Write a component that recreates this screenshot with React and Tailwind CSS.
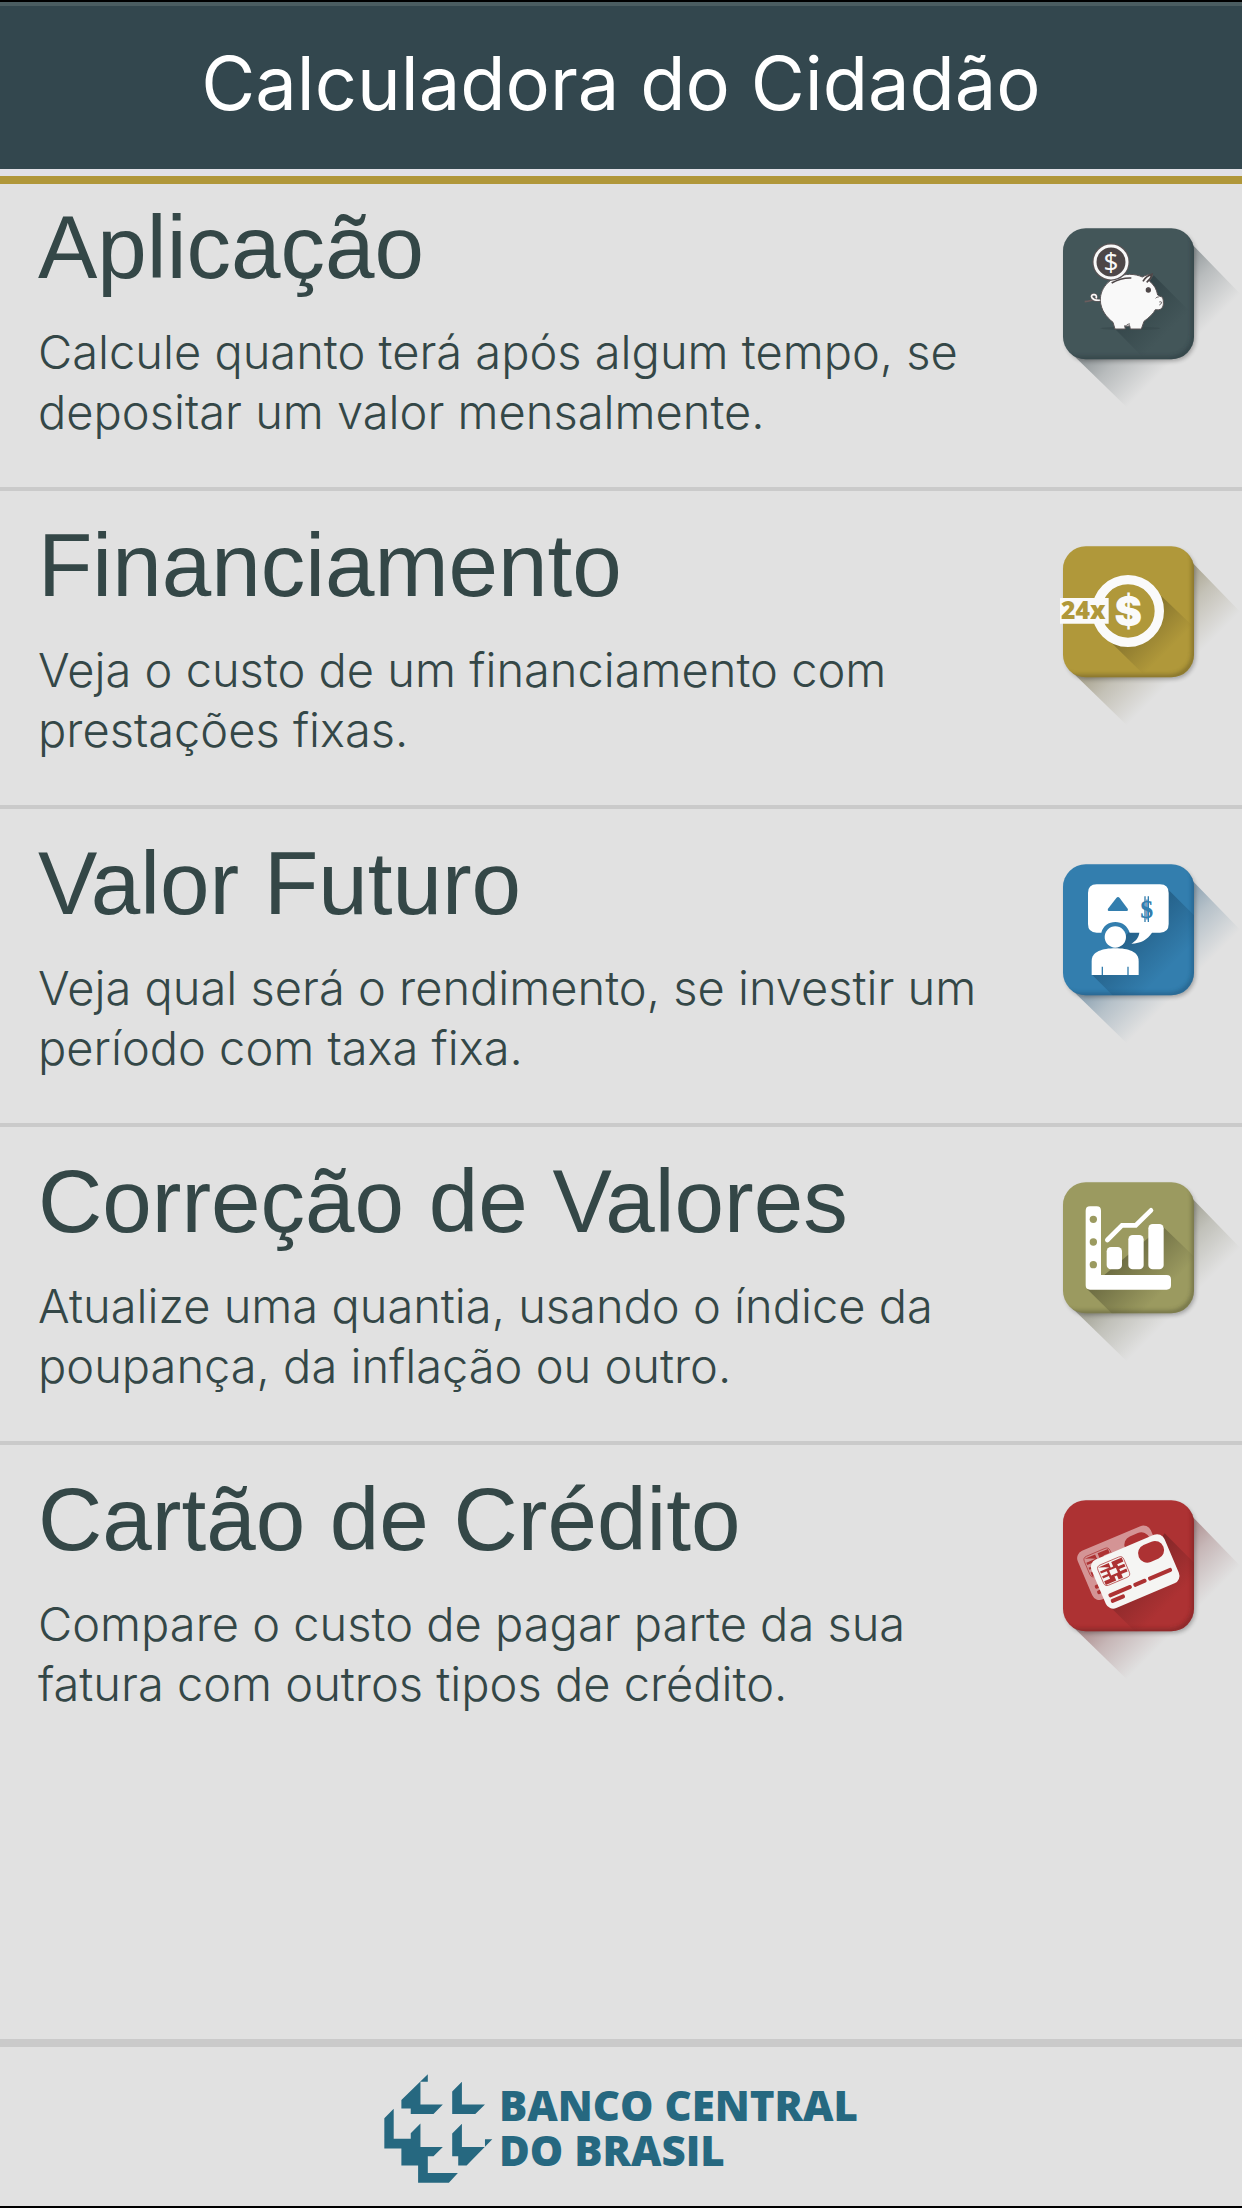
function PiggyIcon() {
  return (
    <g>
      <ellipse cx="265" cy="352" rx="90" ry="5" fill="#37474b" opacity=".6" />
      <path d="M160 262c-8 6-20 9-32 10" fill="none" stroke="#6b5d5e" strokeWidth="5" />
      <path d="M178 267c-12 2-24-1-28-7s1-10 7-9 8 6 5 11" fill="none" stroke="#6b5d5e" strokeWidth="8" />
      <path d="M178 267c-12 2-24-1-28-7s1-10 7-9 8 6 5 11" fill="none" stroke="#f9f9f9" strokeWidth="5" />
      <path
        d="M219 354 213 334C194 319 176 297 175 268c-1-40 34-77 88-78 14 0 27 3 38 8 6-4 20-8 31-9-2 8-6 16-10 21 14 11 22 25 25 42 3 4 11 4 15 8 3 12 4 24-3 32-5 5-12 5-19 4-6 12-18 23-34 35l-8 23h-33l-2-10c-6 2-11 2-15 0l2 10Z"
        fill="#f9f9f9"
        stroke="#5b5557"
        strokeWidth="3"
      />
      <path d="M303 211c5-10 14-17 27-21-2 9-7 17-16 24M209 216c14-8 37-16 59-15" fill="none" stroke="#4e4748" strokeWidth="5" />
      <circle cx="319" cy="237" r="8" fill="#4e4748" />
      <path d="M314 233c2-2 6-3 9-1M341 262c2-3 5-4 9-4M352 273c2-1 5-1 7 1-1 4-4 7-7 8M252 344c3-4 7-5 12-5" fill="none" stroke="#5b5557" strokeWidth="3" />
      <circle cx="207" cy="153" r="56" fill="#5b5557" />
      <circle cx="207" cy="153" r="48" fill="#4e4748" stroke="#f9f9f9" strokeWidth="9" />
      <text x="207" y="181" textAnchor="middle" fill="#f9f9f9" className="font-['Noto_Sans'] text-[78px]">$</text>
    </g>
  )
}

function InstallmentsIcon() {
  return (
    <g>
      <circle cx="258" cy="243" r="94" fill="#b0983a" stroke="#fafafa" strokeWidth="28" />
      <text x="259" y="288" textAnchor="middle" fill="#fafafa" className="font-['Inter'] text-[124px] font-black">$</text>
      <path d="M54 204h146v77H54Z" fill="#fafafa" />
      <text x="124" y="268" textAnchor="middle" fill="#b0983a" className="font-['Open_Sans'] text-[74px] font-extrabold">24x</text>
    </g>
  )
}

function AdvisorIcon() {
  return (
    <g>
      <path
        d="M164 109h190q26 0 26 26v93q0 26-26 26h-24c-13 20-33 32-62 33 13-8 22-18 24-33h-29c-6-20-23-32-43-32s-37 12-42 32h-14q-26 0-26-26v-93q0-26 26-26Z"
        fill="#fff"
      />
      <path d="M223 150q5-6 10 0l24 32q3 7-5 7h-49q-8 0-5-7Z" fill="#337eae" />
      <path d="M309 145v77M319 145v77" stroke="#337eae" strokeWidth="4" />
      <text x="314" y="209" textAnchor="middle" fill="#337eae" className="font-['Liberation_Serif'] text-[78px] font-bold">$</text>
      <circle cx="220" cy="267" r="32" fill="#fff" />
      <path d="M149 381v-42c0-28 32-38 71-38s70 10 70 38v42Z" fill="#fff" />
      <path d="M181 356v25M258 356v25" stroke="#337eae" strokeWidth="4" />
    </g>
  )
}

function ChartIcon() {
  return (
    <g fill="#fff">
      <path d="M144 121h20q13 0 13 13v193h197q13 0 13 13v18q0 13-13 13H144q-13 0-13-13V134q0-13 13-13Z" />
      <rect x="194" y="243" width="46" height="67" rx="13" />
      <rect x="259" y="207" width="46" height="103" rx="13" />
      <rect x="319" y="174" width="46" height="136" rx="13" />
      <path d="m196 222 44-44h41l46-45" fill="none" stroke="#fff" strokeWidth="14" strokeLinecap="round" />
      <g fill="#9b9a60">
        <circle cx="154" cy="160" r="11" />
        <circle cx="154" cy="228" r="11" />
        <circle cx="154" cy="296" r="11" />
      </g>
    </g>
  )
}

function Card({ fill }) {
  return (
    <g>
      <rect width="238" height="158" rx="24" fill={fill} />
      <g fill="#ad3233">
        <rect x="146" y="16" width="80" height="55" rx="27" />
        <rect x="18" y="20" width="84" height="66" rx="12" fill="none" stroke="#ad3233" strokeWidth="2" />
        <path d="M22 25h34v15h8V25h34v13H78v7h20v9H78v7h20v9H78v12H64V69h-8v13H22V70h19v-9H22v-7h19v-9H22v-7h34Z" />
        <rect x="17" y="110" width="75" height="12" rx="5" />
        <rect x="98" y="110" width="42" height="12" rx="5" />
        <rect x="146" y="110" width="77" height="12" rx="5" />
        <rect x="17" y="128" width="45" height="12" rx="5" />
      </g>
      <path d="M48 46h22v16H48Z" fill={fill} />
    </g>
  )
}

function CreditCardIcon() {
  return (
    <g>
      <g transform="translate(98 210) rotate(-23)" opacity=".48">
        <Card fill="#fff" />
      </g>
      <g transform="translate(139 236) rotate(-23)">
        <Card fill="#f5f5f3" />
      </g>
    </g>
  )
}

const services = [
  {
    id: 'aplicacao',
    title: 'Aplicação',
    text: 'Calcule quanto terá após algum tempo, se depositar um valor mensalmente.',
    color: '#435659',
    shade: '#26363b',
    cast: 'M335 190 600 455 455 590 222 354Z',
    icon: PiggyIcon,
    shift: -3,
  },
  {
    id: 'financiamento',
    title: 'Financiamento',
    text: 'Veja o custo de um financiamento com prestações fixas.',
    color: '#b0983a',
    shade: '#5c5020',
    cast: 'M358 198 600 430 455 580 208 338Z',
    icon: InstallmentsIcon,
    shift: 0,
  },
  {
    id: 'valor-futuro',
    title: 'Valor Futuro',
    text: 'Veja qual será o rendimento, se investir um período com taxa fixa.',
    color: '#337eae',
    shade: '#1c4f73',
    cast: 'M374 120 600 345 380 610 150 380Z',
    icon: AdvisorIcon,
    shift: 0,
  },
  {
    id: 'correcao',
    title: 'Correção de Valores',
    text: 'Atualize uma quantia, usando o índice da poupança, da inflação ou outro.',
    color: '#9b9a60',
    shade: '#505030',
    cast: 'M361 180 600 410 380 610 136 370Z',
    icon: ChartIcon,
    shift: 0,
  },
  {
    id: 'cartao',
    title: 'Cartão de Crédito',
    text: 'Compare o custo de pagar parte da sua fatura com outros tipos de crédito.',
    color: '#ad3233',
    shade: '#682022',
    cast: 'M368 148 600 380 440 600 210 374Z',
    icon: CreditCardIcon,
    shift: 0,
  },
]

// Rounded tile with the flat "long shadow" running to the bottom right
function Tile({ id, color, shade, cast, shift, icon: Icon }) {
  return (
    <svg viewBox="0 0 600 630" className="mt-[13px] h-[210px] w-[200px] shrink-0" aria-hidden="true">
      <defs>
        <linearGradient id={`${id}-out`} gradientUnits="userSpaceOnUse" x1="250" y1="250" x2="420" y2="420">
          <stop offset="0" stopColor={shade} stopOpacity=".55" />
          <stop offset=".5" stopColor={shade} stopOpacity=".22" />
          <stop offset="1" stopColor={shade} stopOpacity="0" />
        </linearGradient>
        <linearGradient id={`${id}-in`} gradientUnits="userSpaceOnUse" x1="230" y1="230" x2="370" y2="370">
          <stop offset="0" stopColor={shade} stopOpacity=".75" />
          <stop offset="1" stopColor={shade} stopOpacity="0" />
        </linearGradient>
        <clipPath id={`${id}-clip`}>
          <rect x="63" y="49" width="393" height="393" rx="68" />
        </clipPath>
        <filter id={`${id}-blur`} x="-20%" y="-20%" width="140%" height="140%">
          <feGaussianBlur stdDeviation="7" />
        </filter>
      </defs>
      <path d="M434 80 600 251V630H300L84 420Z" fill={`url(#${id}-out)`} />
      <rect x="70" y="58" width="390" height="390" rx="68" fill="#000" opacity=".28" filter={`url(#${id}-blur)`} />
      <rect x="63" y="49" width="393" height="393" rx="68" fill={color} />
      <g clipPath={`url(#${id}-clip)`}>
        <path d={cast} fill={`url(#${id}-in)`} />
        <rect x="30" y="15" width="426" height="426" rx="74" fill="none" stroke={shade} strokeWidth="12" opacity=".6" filter={`url(#${id}-blur)`} />
      </g>
      <g transform={`translate(0 ${shift})`}>
        <Icon />
      </g>
    </svg>
  )
}

function BankLogo() {
  return (
    <svg viewBox="38 43 326 326" className="size-[109px] shrink-0" fill="#266880" aria-hidden="true">
      <path d="M169 44V66H147V134H214L186 163H118V146H90V121Z" />
      <path d="M271 66V134H340L311 163H242V95Z" />
      <path d="M67 147V237H118V220L147 191V261H214L186 289H169V339H259L232 368H140V317H90V266H39V175Z" />
      <path d="M271 192V261H340V238H362L285 317H260V289H242V221Z" />
    </svg>
  )
}

export default function App() {
  return (
    <div className="flex min-h-screen flex-col border-y-2 border-black bg-[#e1e1e1] font-['Liberation_Sans',sans-serif] text-[#344747]">
      <header className="border-b-8 border-[#b0973a] bg-[#e1e1e6] pb-[7px]">
        <div className="border-t-4 border-[#4b5d61] bg-[#33474e] pt-8 pb-[41px]">
          <h1 className="text-center font-['Inter',sans-serif] text-[74px] leading-[90px] text-white">Calculadora do Cidadão</h1>
        </div>
      </header>

      <main className="flex-1">
        <ul>
          {services.map((service) => (
            <li key={service.id} className="group border-b-4 border-[#cacaca] last:border-b-0">
              <a href={`#${service.id}`} className="flex items-start justify-between pt-[26px] pb-[45px] pl-[38px] group-first:pt-[15px]">
                <div className="max-w-[960px]">
                  <h2 className="text-[89px] leading-[96px]">{service.title}</h2>
                  <p className="mt-[27px] font-['Inter',sans-serif] text-[47px] leading-[60px] font-light">{service.text}</p>
                </div>
                <Tile {...service} />
              </a>
            </li>
          ))}
        </ul>
      </main>

      <footer className="flex items-center justify-center gap-[6px] border-t-8 border-[#cacaca] pt-[27px] pb-[23px]">
        <BankLogo />
        <p className="pb-1 font-['Open_Sans',sans-serif] text-[42px] leading-[45px] font-extrabold text-[#266880]">
          BANCO CENTRAL
          <br />
          DO BRASIL
        </p>
      </footer>
    </div>
  )
}
